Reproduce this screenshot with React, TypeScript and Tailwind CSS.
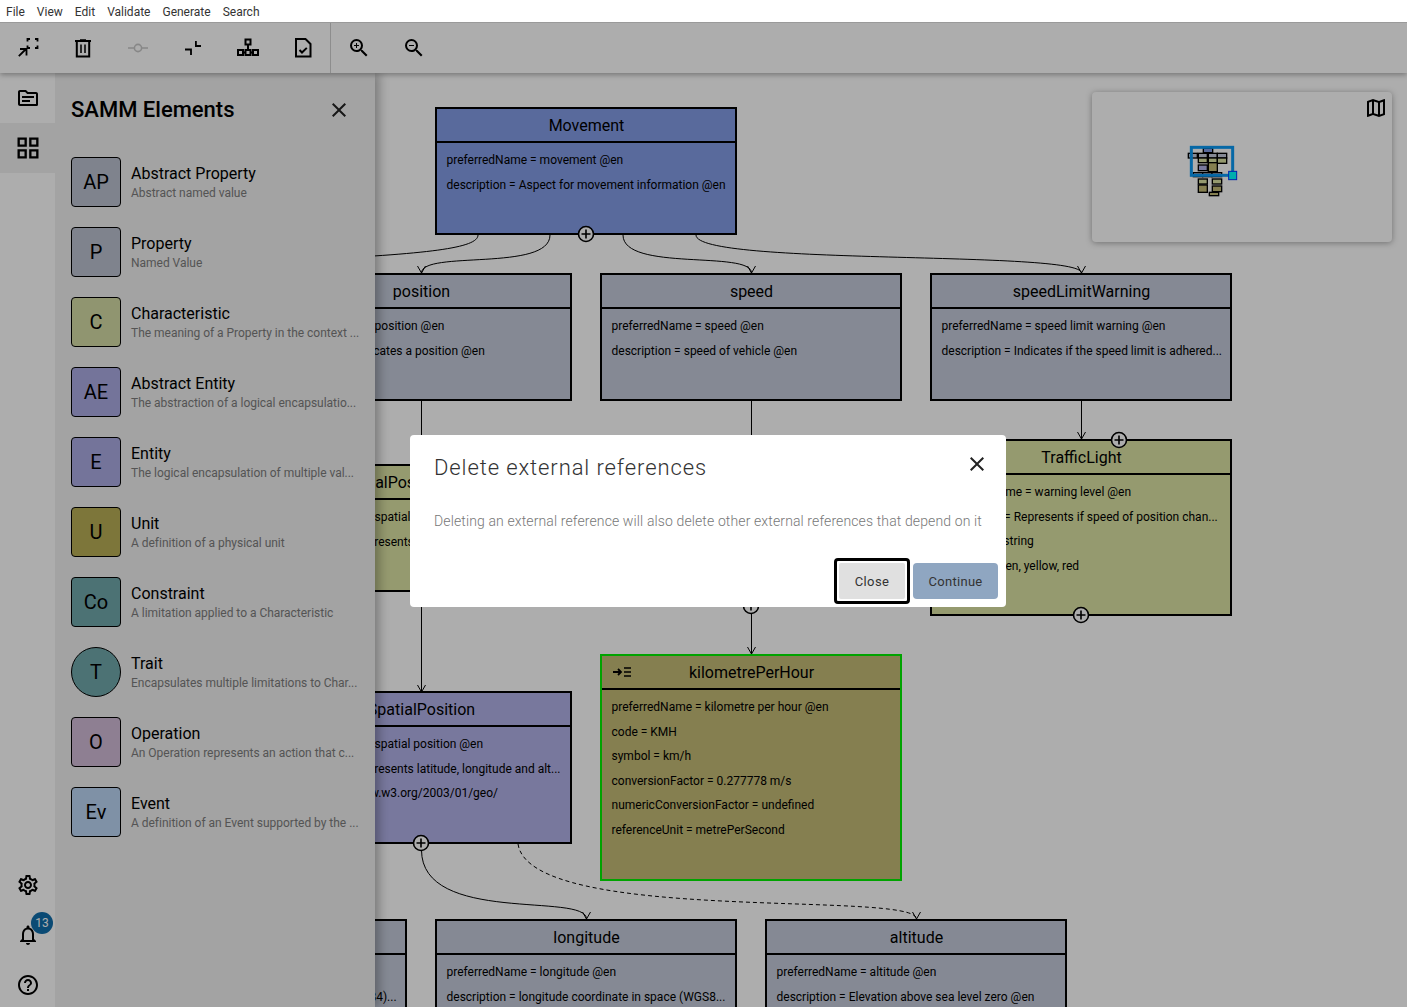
import React from "react";
import {
  MdClose,
  MdHelpOutline,
  MdNotificationsNone,
  MdOutlineGridView,
  MdOutlineMap,
  MdOutlineSettings,
  MdOutlineTopic,
  MdZoomIn,
  MdZoomOut,
} from "react-icons/md";

const ORIGIN_X = 375;
const ORIGIN_Y = 73;

type NodeData = {
  title: string;
  x: number;
  y: number;
  h: number;
  color: string;
  lines: string[];
  selected?: boolean;
  icon?: boolean;
};

const GRAY = "bg-[#c4cbda]";
const GREEN = "bg-[#dce3a4]";
const PURPLE = "bg-[#b2b2e8]";

const nodes: NodeData[] = [
  { title: "Movement", x: 435, y: 107, h: 128, color: "bg-[#849ce6]", lines: ["preferredName = movement @en", "description = Aspect for movement information @en"] },
  { title: "position", x: 270, y: 273, h: 128, color: GRAY, lines: ["preferredName = position @en", "description = Indicates a position @en"] },
  { title: "speed", x: 600, y: 273, h: 128, color: GRAY, lines: ["preferredName = speed @en", "description = speed of vehicle @en"] },
  { title: "speedLimitWarning", x: 930, y: 273, h: 128, color: GRAY, lines: ["preferredName = speed limit warning @en", "description = Indicates if the speed limit is adhered..."] },
  { title: "SpatialPositionElement", x: 270, y: 464, h: 128, color: GREEN, lines: ["preferredName = spatial position characteristic @en", "description = Represents a single location in space"] },
  { title: "Speed", x: 600, y: 439, h: 168, color: GREEN, lines: ["preferredName = speed @en"] },
  { title: "TrafficLight", x: 930, y: 439, h: 177, color: GREEN, lines: ["preferredName = warning level @en", "description = Represents if speed of position chan...", "dataType = string", "values = green, yellow, red"] },
  { title: "kilometrePerHour", x: 600, y: 654, h: 227, color: "bg-[#c4bb76]", selected: true, icon: true, lines: ["preferredName = kilometre per hour @en", "code = KMH", "symbol = km/h", "conversionFactor = 0.277778 m/s", "numericConversionFactor = undefined", "referenceUnit = metrePerSecond"] },
  { title: "SpatialPosition", x: 270, y: 691, h: 153, color: PURPLE, lines: ["preferredName = spatial position @en", "description = Represents latitude, longitude and alt...", "see = https://www.w3.org/2003/01/geo/"] },
  { title: "latitude", x: 105, y: 919, h: 128, color: GRAY, lines: ["preferredName = latitude @en", "description = latitude coordinate in space (WGS84)..."] },
  { title: "longitude", x: 435, y: 919, h: 128, color: GRAY, lines: ["preferredName = longitude @en", "description = longitude coordinate in space (WGS8..."] },
  { title: "altitude", x: 765, y: 919, h: 128, color: GRAY, lines: ["preferredName = altitude @en", "description = Elevation above sea level zero @en"] },
];

const elements = [
  { tag: "AP", name: "Abstract Property", desc: "Abstract named value", color: "bg-[#bbc1d0]" },
  { tag: "P", name: "Property", desc: "Named Value", color: "bg-[#bbc1d0]" },
  { tag: "C", name: "Characteristic", desc: "The meaning of a Property in the context ...", color: "bg-[#d4dca6]" },
  { tag: "AE", name: "Abstract Entity", desc: "The abstraction of a logical encapsulatio...", color: "bg-[#acace4]" },
  { tag: "E", name: "Entity", desc: "The logical encapsulation of multiple val...", color: "bg-[#acace4]" },
  { tag: "U", name: "Unit", desc: "A definition of a physical unit", color: "bg-[#b9ae56]" },
  { tag: "Co", name: "Constraint", desc: "A limitation applied to a Characteristic", color: "bg-[#71a8ac]" },
  { tag: "T", name: "Trait", desc: "Encapsulates multiple limitations to Char...", color: "bg-[#71a8ac]", round: true },
  { tag: "O", name: "Operation", desc: "An Operation represents an action that c...", color: "bg-[#d2bbd7]" },
  { tag: "Ev", name: "Event", desc: "A definition of an Event supported by the ...", color: "bg-[#bbd6f5]" },
];

const menus = ["File", "View", "Edit", "Validate", "Generate", "Search"];

function Corners() {
  return (
    <svg width="24" height="24" viewBox="0 0 24 24" fill="none" stroke="currentColor" strokeWidth="1.8">
      <path d="M11.5 5.5V3H14M19 3h2.5v2.5M21.5 9.5V12H19M14 12h-2.5V9.5" />
      <path d="M2.8 20.2L10 13M4 13h6.5v6.5" />
    </svg>
  );
}
function Trash() {
  return (
    <svg width="24" height="24" viewBox="0 0 24 24" fill="none" stroke="currentColor" strokeWidth="2">
      <path d="M4 5h16M9 4.2h6M5.8 5v15.5h12.4V5" />
      <path d="M10 8.5V17M14 8.5V17" strokeWidth="1.5" />
    </svg>
  );
}
function Commit() {
  return (
    <svg width="24" height="24" viewBox="0 0 24 24" fill="none" stroke="#c8c8c8" strokeWidth="1.6">
      <circle cx="12" cy="12" r="3.6" />
      <path d="M2 12h6.4M15.6 12H22" />
    </svg>
  );
}
function Collapse() {
  return (
    <svg width="24" height="24" viewBox="0 0 24 24" fill="none" stroke="currentColor" strokeWidth="1.8">
      <path d="M14.9 5v5H20M4 13.5h6V19" />
    </svg>
  );
}
function Tree() {
  return (
    <svg width="24" height="24" viewBox="0 0 24 24" fill="none" stroke="currentColor" strokeWidth="2">
      <rect x="9.5" y="3.5" width="5" height="5" />
      <rect x="2" y="14" width="5" height="5" />
      <rect x="9.5" y="14" width="5" height="5" />
      <rect x="17" y="14" width="5" height="5" />
      <path d="M12 8.5V14M7 16.5h2.5M14.5 16.5H17" />
    </svg>
  );
}
function FileCheck() {
  return (
    <svg width="24" height="24" viewBox="0 0 24 24" fill="none" stroke="currentColor" strokeWidth="2">
      <path d="M5 3h9.5L19.5 8v12.5H5z" />
      <path d="M8.5 14l2.5 2.5 4.8-4.6" />
    </svg>
  );
}

function ToolButton({ children }: { children: React.ReactNode }) {
  return <button className="flex h-[50px] w-[55px] items-center justify-center text-black">{children}</button>;
}

function DiagramNode({ node }: { node: NodeData }) {
  return (
    <div
      className={`absolute w-[302px] border-2 text-black ${node.color} ${node.selected ? "border-[#00f000]" : "border-black"}`}
      style={{ left: node.x - ORIGIN_X, top: node.y - ORIGIN_Y, height: node.h }}
    >
      <div className="relative flex h-[34px] items-center justify-center border-b-2 border-black pl-[1px] pt-[1px] text-base">
        {node.icon && (
          <svg className="absolute left-[11px] top-[11px]" width="18" height="10" viewBox="0 0 18 10" fill="none" stroke="black" strokeWidth="1.5">
            <path d="M0 5h8M5 2l3 3-3 3" strokeWidth="1.8" />
            <path d="M11 1h7M11 5h7M11 9h7" />
          </svg>
        )}
        {node.title}
      </div>
      <div className="pl-[9.5px] pr-[9px] pt-[5px] text-xs">
        {node.lines.map((line) => (
          <div key={line} className="flex h-[24.5px] items-center whitespace-nowrap">
            {line}
          </div>
        ))}
      </div>
    </div>
  );
}

function Connectors() {
  const arrow = (x: number, y: number) => `M${x - 4} ${y - 7}L${x} ${y}L${x + 4} ${y - 7}`;
  return (
    <svg className="absolute left-0 top-0" width="1032" height="934" viewBox="375 73 1032 934" fill="none" stroke="black" strokeWidth="1">
      <path d="M478 235C478 248 430 254 300 260" />
      <path d="M550 235C550 272 421.5 250 421.5 273" />
      <path d="M623 235C623 272 751.5 250 751.5 273" />
      <path d="M696 235C696 266 1081.5 250 1081.5 273" />
      <path d="M421.5 401V464M751.5 401V439M1081.5 401V439M751.5 607V654M421.5 592V692" />
      <path d="M421.5 850C421.5 925 586.5 892 586.5 919" />
      <path d="M518 844C530 925 916.5 890 916.5 919" strokeDasharray="4 3" />
      {[[421.5, 273], [751.5, 273], [1081.5, 273], [1081.5, 439], [751.5, 654], [421.5, 692], [586.5, 919], [916.5, 919]].map(([x, y]) => (
        <path key={`${x}-${y}`} d={arrow(x, y)} />
      ))}
    </svg>
  );
}

function PlusDots() {
  const dots = [[586, 234], [1119, 440], [1081, 615], [751, 606], [421, 843]];
  return (
    <svg className="absolute left-0 top-0" width="1032" height="934" viewBox="375 73 1032 934" fill="none" stroke="black">
      {dots.map(([x, y]) => (
        <g key={`${x}-${y}`}>
          <circle cx={x} cy={y} r="7.5" fill="white" strokeWidth="1.6" />
          <path d={`M${x - 4.5} ${y}H${x + 4.5}M${x} ${y - 4.5}V${y + 4.5}`} strokeWidth="1.6" />
        </g>
      ))}
    </svg>
  );
}

function MiniMap() {
  const rects: [number, number, number, number, string][] = [
    [100, 55, 28, 13, "#849ce6"],
    [55, 70, 27, 14, "#c4cbda"],
    [85, 70, 27, 14, "#c4cbda"],
    [115, 70, 27, 14, "#c4cbda"],
    [142, 70, 28, 14, "#c4cbda"],
    [85, 84, 27, 14, "#dce3a4"],
    [115, 84, 27, 14, "#dce3a4"],
    [142, 84, 28, 16, "#dce3a4"],
    [85, 105, 27, 17, "#b2b2e8"],
    [115, 98, 27, 27, "#c4bb76"],
    [70, 128, 28, 12, "#c4cbda"],
    [98, 128, 28, 12, "#c4cbda"],
    [126, 128, 29, 12, "#c4cbda"],
    [85, 147, 27, 15, "#dce3a4"],
    [127, 147, 28, 15, "#dce3a4"],
    [85, 165, 27, 22, "#c4bb76"],
    [127, 168, 28, 17, "#c4bb76"],
    [118, 187, 28, 10, "#c4bb76"],
  ];
  return (
    <div className="absolute left-[717px] top-[19px] h-[150px] w-[300px] rounded-[4px] bg-white shadow-[0_1px_6px_rgba(0,0,0,0.35)]">
      <MdOutlineMap className="absolute right-[4px] top-[4px] text-black" size={24} />
      <svg className="absolute left-[78px] top-[38px]" width="80" height="80" viewBox="0 0 240 240">
        {rects.map(([x, y, w, h, fill]) => (
          <rect key={`${x}-${y}`} x={x} y={y} width={w} height={h} fill={fill} stroke="black" strokeWidth="4" />
        ))}
        <rect x="64" y="52" width="124" height="84" fill="none" stroke="#0a9af5" strokeWidth="9" />
        <rect x="176" y="124" width="24" height="25" fill="#00ffff" stroke="#0033ff" strokeWidth="3" />
      </svg>
    </div>
  );
}

export default function App() {
  return (
    <div className="relative flex h-[1007px] w-[1407px] flex-col overflow-hidden bg-white font-[Roboto,sans-serif] text-black">
      <nav className="relative z-40 flex h-[23px] shrink-0 items-center gap-[12px] border-b border-[#9a9a9a] bg-white px-[6px] pt-[2px] text-xs text-[#333]">
        {menus.map((m) => (
          <span key={m}>{m}</span>
        ))}
      </nav>

      <header className="relative z-20 flex h-[50px] shrink-0 bg-white shadow-[0_2px_5px_rgba(0,0,0,0.3)]">
        <div className="flex border-r border-[#d0d0d0]">
          <ToolButton><Corners /></ToolButton>
          <ToolButton><Trash /></ToolButton>
          <ToolButton><Commit /></ToolButton>
          <ToolButton><Collapse /></ToolButton>
          <ToolButton><Tree /></ToolButton>
          <ToolButton><FileCheck /></ToolButton>
        </div>
        <ToolButton><MdZoomIn size={24} /></ToolButton>
        <ToolButton><MdZoomOut size={24} /></ToolButton>
      </header>

      <div className="flex min-h-0 flex-1">
        <aside className="relative z-[12] flex w-[55px] shrink-0 flex-col bg-white">
          <button className="flex h-[50px] items-center justify-center"><MdOutlineTopic size={24} /></button>
          <button className="flex h-[50px] items-center justify-center bg-[#f0f0f0]"><MdOutlineGridView size={28} /></button>
          <div className="mt-auto -mb-[3px] flex flex-col">
            <button className="flex h-[50px] items-center justify-center"><MdOutlineSettings size={24} /></button>
            <button className="relative flex h-[50px] items-center justify-center">
              <MdNotificationsNone size={24} />
              <span className="absolute left-[31px] top-[2px] flex h-[22px] w-[22px] items-center justify-center rounded-full bg-[#106dab] text-xs text-white">13</span>
            </button>
            <button className="flex h-[50px] items-center justify-center"><MdHelpOutline size={24} /></button>
          </div>
        </aside>

        <section className="relative z-10 w-[320px] shrink-0 bg-[#f0f0f0] px-[16px] shadow-[4px_0_10px_rgba(0,0,0,0.3)]">
          <div className="flex h-[74px] items-center justify-between">
            <h2 className="text-[22px] font-medium leading-none">SAMM Elements</h2>
            <MdClose size={24} className="mr-[8px] text-[#222]" />
          </div>
          <ul className="mt-[10px] flex flex-col">
            {elements.map((el) => (
              <li key={el.tag} className="flex h-[70px] items-start gap-[10px]">
                <div className={`flex h-[50px] w-[50px] shrink-0 items-center justify-center border border-black text-xl ${el.color} ${el.round ? "rounded-full" : "rounded-[4px]"}`}>
                  {el.tag}
                </div>
                <div className="min-w-0 pt-[7px]">
                  <div className="text-base leading-[20px]">{el.name}</div>
                  <div className="-mt-[1px] whitespace-nowrap text-xs leading-[20px] tracking-[-0.02px] text-[#7d7d7d]">{el.desc}</div>
                </div>
              </li>
            ))}
          </ul>
        </section>

        <main className="relative min-w-0 flex-1 overflow-hidden bg-white">
          <Connectors />
          {nodes.map((n) => (
            <DiagramNode key={n.title} node={n} />
          ))}
          <PlusDots />
          <MiniMap />
        </main>
      </div>

      <div className="absolute inset-x-0 bottom-0 top-[23px] z-30 bg-black/32" />

      <div className="absolute left-[410px] top-[435px] z-40 h-[172px] w-[596px] rounded-[4px] bg-white px-[24px] pt-[18px]">
        <div className="flex items-start justify-between">
          <h3 className="text-[22px] font-light leading-[30px] tracking-[0.9px] text-[#333]">Delete external references</h3>
          <MdClose size={24} className="-mr-[7px] -mt-[1px] text-[#222]" />
        </div>
        <p className="mt-[28px] whitespace-nowrap text-sm font-light leading-[20px] tracking-[0.12px] text-[#777]">
          Deleting an external reference will also delete other external references that depend on it
        </p>
        <div className="absolute bottom-[3px] right-[8px] flex items-center gap-[3px]">
          <button className="flex h-[46px] w-[76px] items-center justify-center rounded-[4px] border-[3px] border-black p-[2px]">
            <span className="flex h-[36px] w-full items-center justify-center rounded-[2px] bg-[#e0e0e0] pt-[1px] text-[13px] tracking-[0.4px] text-[#333]">Close</span>
          </button>
          <button className="flex h-[36px] w-[85px] items-center justify-center rounded-[4px] bg-[#8fa6c1] pt-[1px] text-[13px] tracking-[0.3px] text-[#333]">Continue</button>
        </div>
      </div>
    </div>
  );
}
